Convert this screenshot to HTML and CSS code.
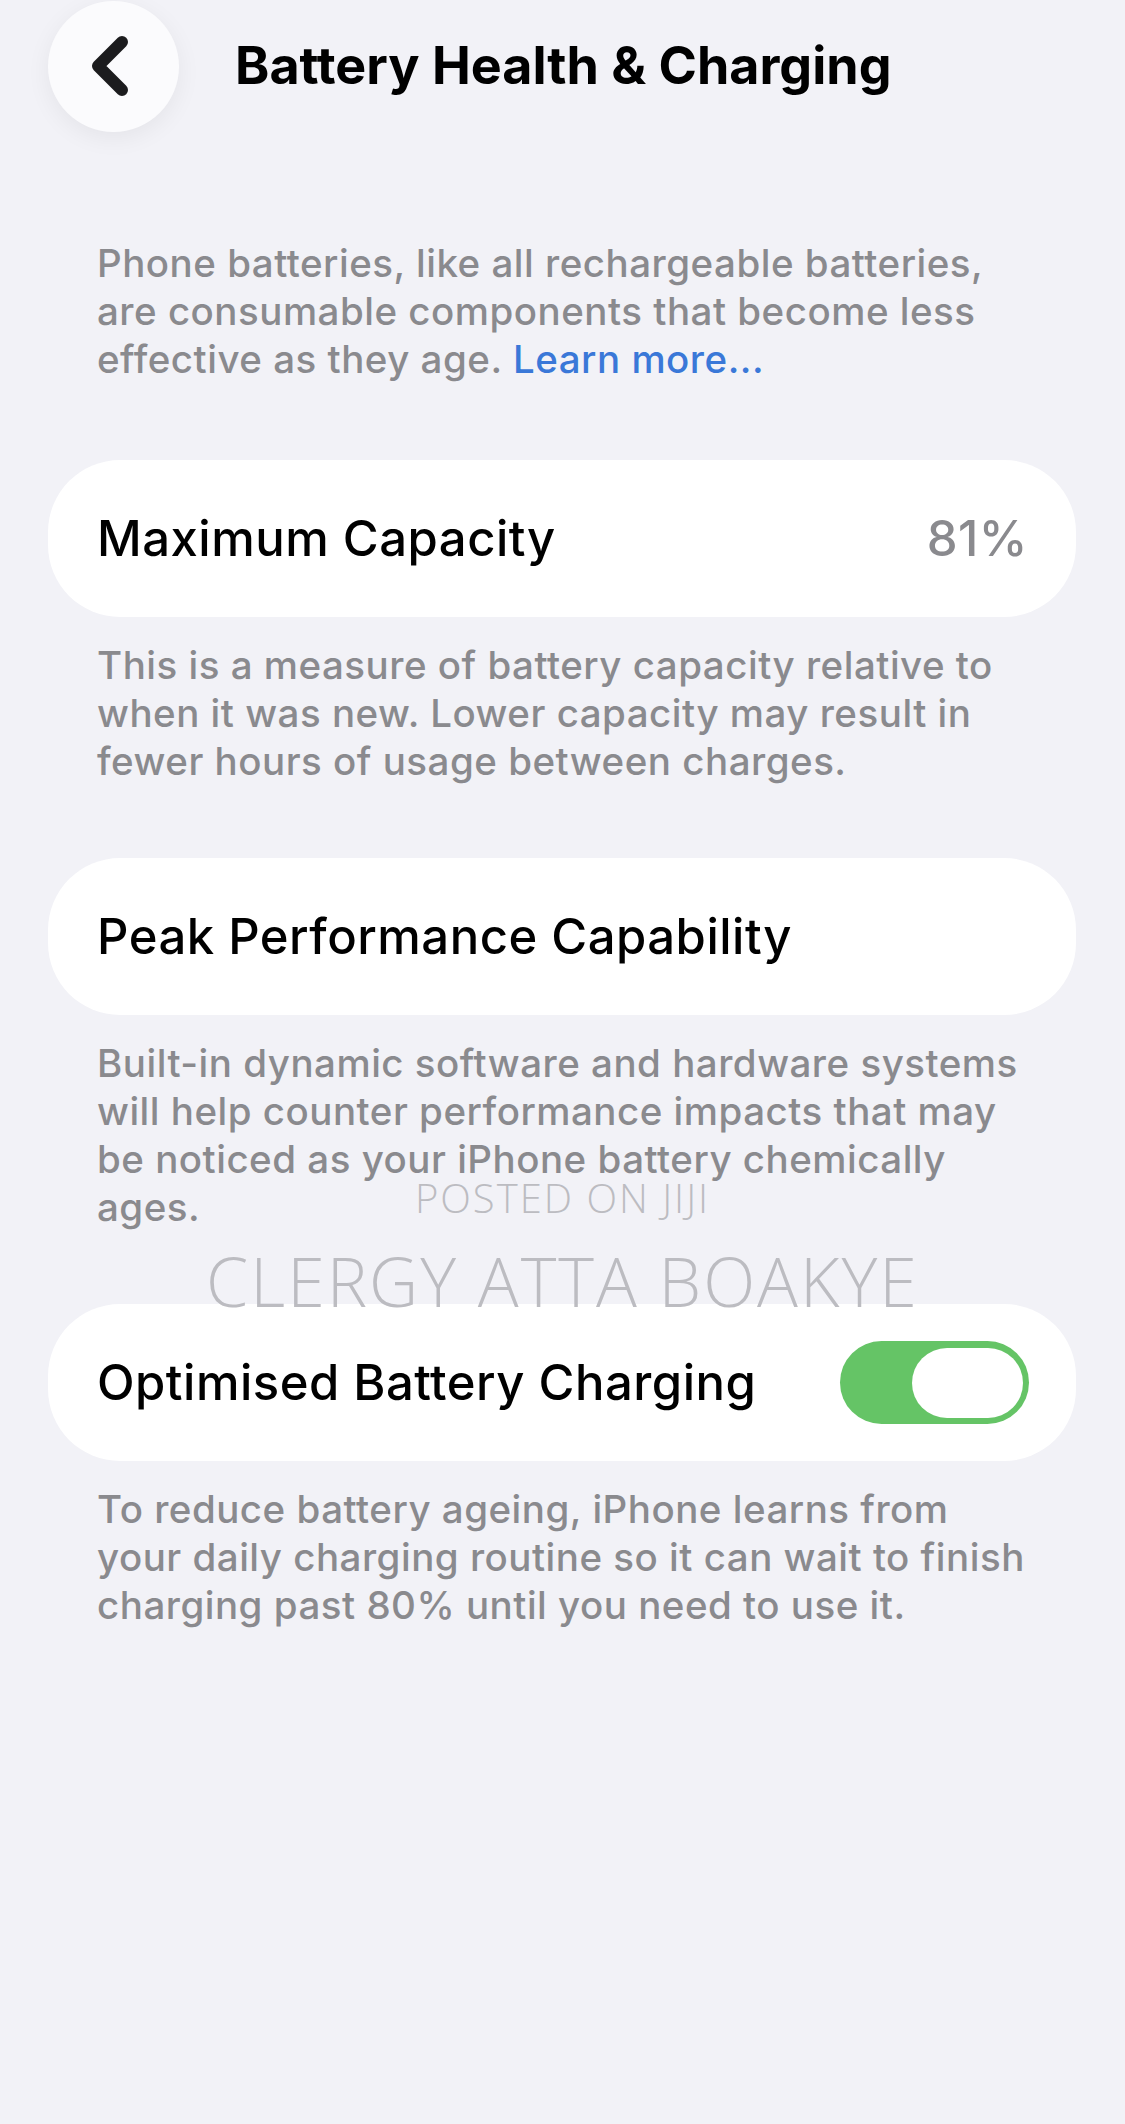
FILE: index.html
```html
<!DOCTYPE html>
<html lang="en">
<head>
  <meta charset="UTF-8">
  <meta name="viewport" content="width=device-width, initial-scale=1.0">
  <title>Battery Health &amp; Charging</title>
  <link rel="stylesheet" href="styles.css">
</head>
<body>
  <div class="page">
    <div class="header">
      <button class="back" aria-label="Back">
        <svg width="40" height="64" viewBox="0 0 40 64">
          <path d="M31 8 L7 32 L31 56" fill="none" stroke="#1c1c1e" stroke-width="12" stroke-linecap="round" stroke-linejoin="round"/>
        </svg>
      </button>
      <h1>Battery Health &amp; Charging</h1>
    </div>

    <p class="note intro">Phone batteries, like all rechargeable batteries, are consumable components that become less effective as they age. <a href="#">Learn more...</a></p>

    <div class="card">
      <span class="label">Maximum Capacity</span>
      <span class="value">81%</span>
    </div>
    <p class="note">This is a measure of battery capacity relative to when it was new. Lower capacity may result in fewer hours of usage between charges.</p>

    <div class="card">
      <span class="label">Peak Performance Capability</span>
    </div>
    <p class="note">Built-in dynamic software and hardware systems will help counter performance impacts that may be noticed as your iPhone battery chemically ages.</p>

    <div class="card">
      <span class="label">Optimised Battery Charging</span>
      <span class="toggle on"><span class="knob"></span></span>
    </div>
    <p class="note">To reduce battery ageing, iPhone learns from your daily charging routine so it can wait to finish charging past 80% until you need to use it.</p>
  </div>

  <div class="watermark">
    <div class="wm-small">POSTED ON JIJI</div>
    <div class="wm-big">CLERGY ATTA BOAKYE</div>
  </div>
</body>
</html>
```

FILE: styles.css
```css
body {
  margin: 0;
  background: #f2f2f7;
  font-family: Inter, "Noto Sans", sans-serif;
  color: #000;
  min-height: 2124px;
  position: relative;
}
.page {
  padding: 0 49px 0 48px;
}
.header {
  display: flex;
  align-items: center;
  height: 132px;
}
.back {
  width: 131px;
  height: 131px;
  border: none;
  border-radius: 50%;
  background: #fbfbfd;
  box-shadow: 0 6px 24px rgba(0, 0, 0, 0.06);
  display: flex;
  align-items: center;
  justify-content: center;
  padding: 0 6px 0 0;
  cursor: pointer;
}
.header h1 {
  margin: 0 0 2px 56px;
  font-size: 52px;
  font-weight: 700;
}
.note {
  margin: 24px 0 73px;
  padding: 0 48px 0 49px;
  font-size: 38.5px;
  font-weight: 500;
  line-height: 48px;
  color: #8a8a8e;
  letter-spacing: 0.5px;
}
.intro {
  margin-top: 107px;
  margin-bottom: 77px;
}
.note a {
  color: #3a78d8;
  text-decoration: none;
}
.card {
  background: #fff;
  border-radius: 72px;
  height: 157px;
  display: flex;
  align-items: center;
  justify-content: space-between;
  padding: 0 48px 0 49px;
}
.label {
  font-size: 49px;
  font-weight: 500;
  letter-spacing: 0.5px;
}
.value {
  font-size: 49px;
  font-weight: 500;
  letter-spacing: 0.5px;
  color: #8a8a8e;
}
.toggle {
  width: 189px;
  height: 83px;
  border-radius: 42px;
  background: #65c466;
  display: flex;
  align-items: center;
  justify-content: flex-end;
  padding: 0 6px;
  box-sizing: border-box;
  margin-right: -1px;
}
.knob {
  width: 111px;
  height: 70px;
  border-radius: 35px;
  background: #fff;
}
.watermark {
  position: absolute;
  left: 0;
  right: 0;
  top: 1173px;
  text-align: center;
  font-family: "Open Sans", "Noto Sans", sans-serif;
  font-weight: 300;
  color: #bcbcc1;
  pointer-events: none;
}
.wm-small {
  font-size: 40px;
  line-height: 50px;
  letter-spacing: 2px;
}
.wm-big {
  font-size: 68px;
  line-height: 80px;
  letter-spacing: 2px;
  margin-top: 18px;
}
```
